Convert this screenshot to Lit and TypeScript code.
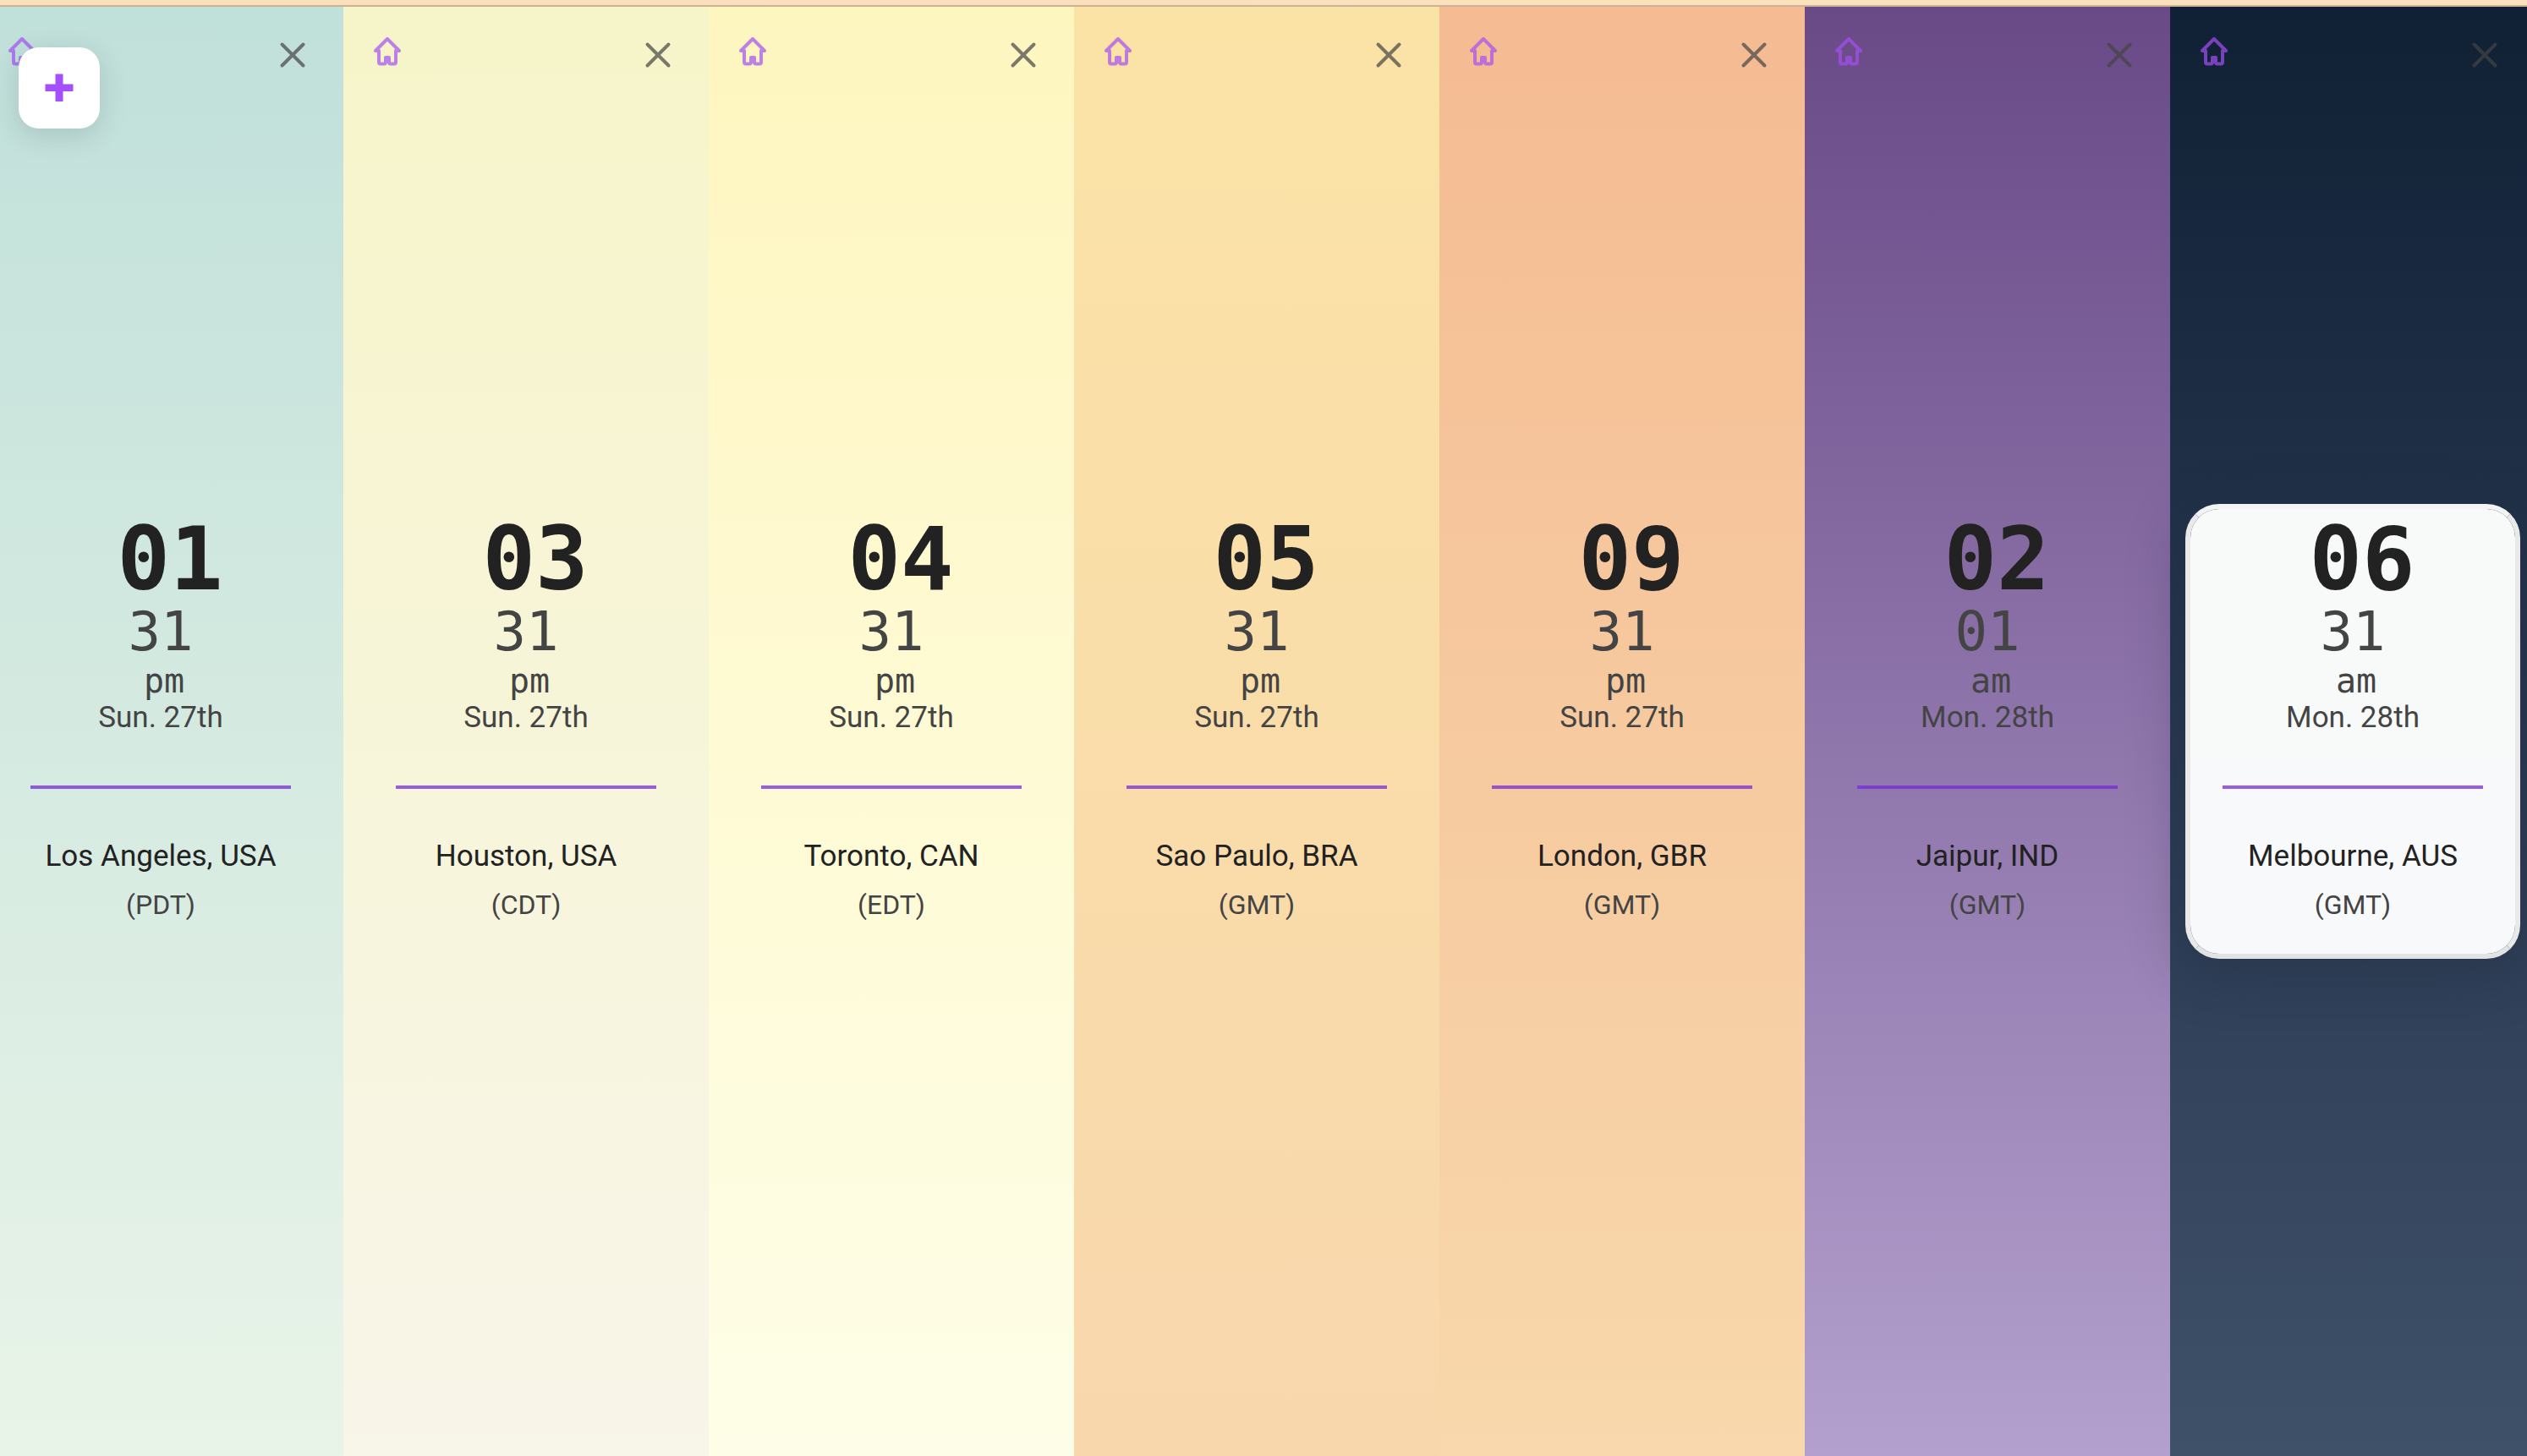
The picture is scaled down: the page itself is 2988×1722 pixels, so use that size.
import { LitElement, html, css } from "lit";
import { customElement, property } from "lit/decorators.js";
import { styleMap } from "lit/directives/style-map.js";

interface Zone {
  hour: string;
  minute: string;
  period: string;
  date: string;
  place: string;
  zone: string;
  sky: [string, string];
  active?: boolean;
}

const zones: Zone[] = [
  { hour: "01", minute: "31", period: "pm", date: "Sun. 27th", place: "Los Angeles, USA", zone: "(PDT)", sky: ["#c0e0da", "#e9f4e8"] },
  { hour: "03", minute: "31", period: "pm", date: "Sun. 27th", place: "Houston, USA", zone: "(CDT)", sky: ["#f6f5c9", "#f8f5e9"] },
  { hour: "04", minute: "31", period: "pm", date: "Sun. 27th", place: "Toronto, CAN", zone: "(EDT)", sky: ["#fef6bf", "#fefee8"] },
  { hour: "05", minute: "31", period: "pm", date: "Sun. 27th", place: "Sao Paulo, BRA", zone: "(GMT)", sky: ["#fbe3a6", "#f8d7ad"] },
  { hour: "09", minute: "31", period: "pm", date: "Sun. 27th", place: "London, GBR", zone: "(GMT)", sky: ["#f5bb92", "#f8d8ac"] },
  { hour: "02", minute: "01", period: "am", date: "Mon. 28th", place: "Jaipur, IND", zone: "(GMT)", sky: ["#694a87", "#b3a0ce"] },
  { hour: "06", minute: "31", period: "am", date: "Mon. 28th", place: "Melbourne, AUS", zone: "(GMT)", sky: ["#102136", "#3f5069"], active: true },
];

@customElement("zone-column")
export class ZoneColumn extends LitElement {
  @property({ attribute: false }) data!: Zone;

  static styles = css`
    :host {
      display: block;
      flex: 1 1 0;
      min-width: 0;
    }
    .column {
      box-sizing: border-box;
      position: relative;
      height: 100%;
      display: flex;
      flex-direction: column;
      justify-content: center;
      padding: 0 18px;
    }
    .tools {
      position: absolute;
      inset: 24px 40px auto 32px;
      display: flex;
      justify-content: space-between;
    }
    .tool {
      display: flex;
      padding: 0;
      border: 0;
      background: none;
      cursor: pointer;
    }
    .home {
      color: #a54ff3;
      opacity: 0.7;
      padding-top: 8px;
    }
    .close {
      color: #444;
      opacity: 0.7;
      padding-top: 12px;
    }
    .card {
      border: 6px solid transparent;
      border-radius: 40px;
      padding: 8px 36px 38px;
      text-align: center;
      color: #444;
      font-family: Roboto, "Liberation Sans", sans-serif;
    }
    .card.active {
      border-color: #f3f3f3 #e9e9e9 #e2e3e4;
      background: linear-gradient(#f8faf9 50%, #f8f9fb 62%) padding-box;
      box-shadow: 0 16px 64px rgba(31, 38, 60, 0.35);
    }
    .time {
      display: block;
      font-family: "DejaVu Sans Mono", "Liberation Mono", monospace;
    }
    .hour,
    .minute,
    .period {
      display: block;
    }
    .hour {
      padding-left: 22px;
      font-size: 104px;
      line-height: 102px;
      font-weight: 700;
      color: #222;
    }
    .minute {
      font-size: 64px;
      line-height: 70px;
    }
    .period {
      padding-left: 8px;
      font-size: 40px;
      line-height: 46px;
    }
    .date,
    .place,
    .zone {
      margin: 0;
      font-size: 35px;
      line-height: 42px;
      font-weight: 400;
      white-space: nowrap;
    }
    .rule {
      height: 4px;
      margin: 59px 2px;
      border: 0;
      background: #7828dc;
      opacity: 0.75;
    }
    .place {
      color: #222;
    }
    .zone {
      margin-top: 16px;
      font-size: 32px;
      line-height: 40px;
    }
  `;

  render() {
    const d = this.data;
    return html`
      <section
        class="column"
        aria-label=${d.place}
        style=${styleMap({ background: `linear-gradient(${d.sky[0]}, ${d.sky[1]})` })}
      >
        <div class="tools">
          <button class="tool home" aria-label="Set as home">
            <svg width="40" height="40" viewBox="0 0 40 40" fill="none" stroke="currentColor" stroke-width="4" stroke-linecap="round" stroke-linejoin="round">
              <path d="M10 20 H6 L20 6 L34 20 H30 V33.500 Q30 35.500 28 35.500 H24 Q22 35.500 22 33.500 V28 H18 V33.500 Q18 35.500 16 35.500 H12 Q10 35.500 10 33.500 Z" />
            </svg>
          </button>
          <button class="tool close" aria-label="Remove">
            <svg width="40" height="40" viewBox="0 0 40 40" fill="none" stroke="currentColor" stroke-width="4" stroke-linecap="round">
              <path d="M7.500 8.500 L32.500 33.500 M32.500 8.500 L7.500 33.500" />
            </svg>
          </button>
        </div>
        <div class="card ${d.active ? "active" : ""}">
          <time class="time">
            <span class="hour">${d.hour}</span>
            <span class="minute">${d.minute}</span>
            <span class="period">${d.period}</span>
          </time>
          <p class="date">${d.date}</p>
          <hr class="rule" />
          <h2 class="place">${d.place}</h2>
          <p class="zone">${d.zone}</p>
        </div>
      </section>
    `;
  }
}

@customElement("app-root")
export class AppRoot extends LitElement {
  static styles = css`
    :host {
      display: flex;
      flex-direction: column;
      position: relative;
      height: 100vh;
      overflow: hidden;
    }
    .bar {
      flex: none;
      height: 6px;
      border-bottom: 2px solid #c9b397;
      background: linear-gradient(90deg, #fcdfbc, #fbe1bd);
    }
    .board {
      flex: 1;
      min-height: 0;
      display: flex;
      margin: 0 -10px 0 -26px;
    }
    .add {
      position: absolute;
      top: 56px;
      left: 22px;
      width: 96px;
      height: 96px;
      display: grid;
      place-items: center;
      padding: 0;
      border: 0;
      border-radius: 24px;
      background: #fff;
      color: #a54ff8;
      box-shadow: 0 8px 32px rgba(31, 38, 60, 0.16);
      cursor: pointer;
    }
  `;

  render() {
    return html`
      <header class="bar"></header>
      <main class="board">
        ${zones.map((z) => html`<zone-column .data=${z}></zone-column>`)}
      </main>
      <button class="add" aria-label="Add a city">
        <svg width="34" height="34" viewBox="0 0 34 34" fill="currentColor">
          <path d="M12.500 0.500 H21.500 V12.500 H33.500 V21 H21.500 V33 H12.500 V21 H0.500 V12.500 H12.500 Z" />
        </svg>
      </button>
    `;
  }
}
